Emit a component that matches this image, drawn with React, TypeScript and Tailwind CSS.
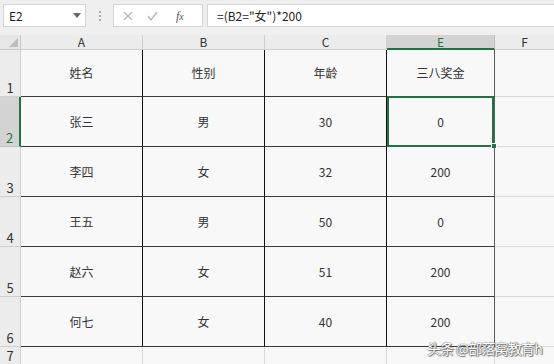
const font = { fontFamily: '"Noto Sans CJK SC", "Noto Sans", sans-serif' }

const rows = [
  ['姓名', '性别', '年龄', '三八奖金'],
  ['张三', '男', '30', '0'],
  ['李四', '女', '32', '200'],
  ['王五', '男', '50', '0'],
  ['赵六', '女', '51', '200'],
  ['何七', '女', '40', '200'],
]

const heights = ['h-[47px]', 'h-[50px]', 'h-[50px]', 'h-[50px]', 'h-[50px]', 'h-[50px]']

const App = () => {
  return (
    <div className="w-[554px] h-[364px] overflow-hidden bg-[#f8f8f8] relative text-[#222]" style={font}>

      {/* FORMULA BAR */}
      <div className="h-[35px] bg-[#efefef] flex items-start pt-[4px] gap-0">
        <div className="ml-[3px] w-[83px] h-[23px] bg-white border border-[#d4d4d4] flex items-center justify-between pl-[5px] pr-[4px]">
          <span className="text-[12px] leading-none text-[#222]">E2</span>
          <svg width="8" height="5" viewBox="0 0 8 5"><path d="M0 0h8L4 5z" fill="#666" /></svg>
        </div>
        <div className="w-[27px] h-[23px] flex flex-col items-center justify-center gap-[2px]">
          <span className="w-[2px] h-[2px] bg-[#aaa]" />
          <span className="w-[2px] h-[2px] bg-[#aaa]" />
          <span className="w-[2px] h-[2px] bg-[#aaa]" />
        </div>
        <div className="w-[90px] h-[23px] bg-white border border-[#d4d4d4] flex items-center pl-[9px] gap-[14px]">
          <svg width="10" height="10" viewBox="0 0 10 10"><path d="M1 1l8 8M9 1l-8 8" stroke="#b5b5b5" strokeWidth="1.2" /></svg>
          <svg width="11" height="10" viewBox="0 0 11 10"><path d="M1 5l3 4 6-8" stroke="#b5b5b5" strokeWidth="1.3" fill="none" /></svg>
          <span className="text-[12px] italic text-[#555] leading-none ml-[4px]" style={{ fontFamily: '"Liberation Serif", serif' }}>
            f<span className="text-[10px]">x</span>
          </span>
        </div>
        <div className="ml-[4px] flex-1 h-[23px] bg-white border border-[#d4d4d4] border-r-0 flex items-center pl-[9px]">
          <span className="text-[12px] leading-none text-[#222]">=(B2="女")*200</span>
        </div>
      </div>

      {/* GRID */}
      <div className="grid grid-cols-[21px_122px_122px_122px_108px_1fr]">
        {/* column header row */}
        <div className="h-[15px] bg-[#e6e6e6] border-r border-b border-[#c9c9c9] relative">
          <svg className="absolute right-[2px] bottom-[2px]" width="9" height="9" viewBox="0 0 9 9"><path d="M9 0v9H0z" fill="#bdbdbd" /></svg>
        </div>
        {['A', 'B', 'C'].map((c) => (
          <div key={c} className="h-[15px] bg-[#ececec] border-r border-b border-[#cfcfcf] flex items-center justify-center text-[12px] leading-none text-[#333]">
            {c}
          </div>
        ))}
        <div className="h-[15px] bg-[#d3d3d3] border-r border-[#bcbcbc] border-b-2 border-b-[#217346] flex items-center justify-center text-[12px] leading-none text-[#217346]">
          E
        </div>
        <div className="h-[15px] bg-[#ececec] border-b border-[#cfcfcf] flex items-center justify-center text-[12px] leading-none text-[#333]">
          F
        </div>

        {rows.map((r, i) => (
          <div key={i} className="contents">
            <div
              className={
                i === 1
                  ? `${heights[i]} bg-[#d3d3d3] border-r-2 border-r-[#217346] border-b border-b-[#c2c2c2] flex items-end justify-center text-[13px] leading-[16px] text-[#217346]`
                  : `${heights[i]} bg-[#ececec] border-r border-b border-[#cfcfcf] flex items-end justify-center text-[13px] leading-[16px] text-[#333]`
              }
            >
              {i + 1}
            </div>
            {r.map((v, j) => (
              <div
                key={j}
                className={`${heights[i]} relative flex items-center justify-center text-[12px] text-[#333] border-b border-b-[#3a3a3a] ${
                  j === 3 ? 'border-r border-r-[#5a5a5a]' : 'border-r border-r-[#111]'
                }`}
              >
                {v}
                {i === 1 && j === 3 && (
                  <>
                    <div className="absolute inset-x-0 -top-[1px] -bottom-[1px] border-2 border-[#217346]" />
                    <div className="absolute -right-[3px] -bottom-[3px] w-[6px] h-[6px] bg-[#217346] border border-white" />
                  </>
                )}
              </div>
            ))}
            <div className={`${heights[i]} border-b border-[#dadada]`} />
          </div>
        ))}

        {/* row 7 */}
        <div className="h-[17px] bg-[#ececec] border-r border-[#cfcfcf] flex items-end justify-center text-[13px] leading-[16px] text-[#333]">7</div>
        <div className="h-[17px] border-r border-[#dadada]" />
        <div className="h-[17px] border-r border-[#dadada]" />
        <div className="h-[17px] border-r border-[#dadada]" />
        <div className="h-[17px] border-r border-[#dadada]" />
        <div className="h-[17px]" />
      </div>

      {/* WATERMARK */}
      <div
        className="absolute left-[427px] top-[339px] text-[14px] leading-[18px] text-white whitespace-nowrap tracking-[-0.8px]"
        style={{ textShadow: '0 0 1px #555, 0 0 1px #555, 1px 1px 1px #777' }}
      >
        头条 @部落窝教育h
      </div>
    </div>
  )
}

export default App
